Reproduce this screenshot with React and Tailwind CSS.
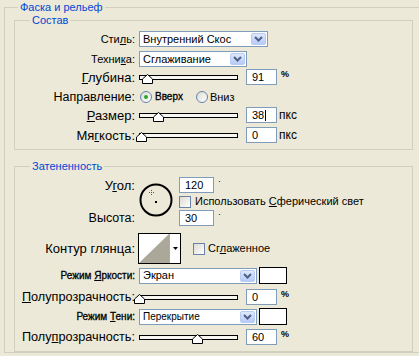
import React from "react";

const U = ({ children }) => (
  <span className="underline decoration-1 underline-offset-[1px]">{children}</span>
);

function Label({ children, className = "" }) {
  return <div className={`w-[120px] shrink-0 text-right leading-none ${className}`}>{children}</div>;
}

function Chevron() {
  return (
    <svg width="9" height="6" viewBox="0 0 9 6">
      <path d="M1 1 L4.5 4.5 L8 1" fill="none" stroke="#4d6185" strokeWidth="2" />
    </svg>
  );
}

function Select({ value, width, textClass = "text-[11px]" }) {
  return (
    <div className={`ml-[4px] flex h-[16px] items-center border border-[#7f9db9] bg-white ${width}`}>
      <span className={`flex-1 pl-[3px] leading-none text-black ${textClass}`}>{value}</span>
      <div className="mr-[1px] flex h-[12px] w-[15px] items-center justify-center rounded-[2px] border border-[#b8cbf3] bg-gradient-to-b from-[#dfe8fd] to-[#b7cbf8]">
        <Chevron />
      </div>
    </div>
  );
}

function Slider({ thumb }) {
  return (
    <div className="relative ml-[4px] h-[5px] w-[99px] border border-black bg-[#f7f6f1]">
      <svg
        className="absolute top-[-2px]"
        style={{ left: thumb }}
        width="11"
        height="10"
        viewBox="0 0 11 10"
      >
        <polygon points="5.5,0.5 10.5,5 10.5,9.5 0.5,9.5 0.5,5" fill="#fff" stroke="#000" strokeWidth="1" />
      </svg>
    </div>
  );
}

function Field({ value, cursor, width = "w-[31px]", className = "ml-[8px]" }) {
  return (
    <div className={`flex h-[16px] items-center border border-[#7f9db9] bg-white pl-[5px] text-[11px] leading-none text-black ${width} ${className}`}>
      {value}
      {cursor && <span className="ml-[1px] inline-block h-[11px] w-px bg-black" />}
    </div>
  );
}

function Pct() {
  return <span className="ml-[4px] self-start pt-[1px] text-[9px] font-bold leading-none">%</span>;
}

function Px() {
  return <span className="ml-[2px] text-[12px] leading-none">пкс</span>;
}

function Check() {
  return (
    <div className="h-[12px] w-[12px] shrink-0 border border-[#6a82a8] bg-gradient-to-br from-[#dcdbd3] to-white" />
  );
}

export default function App() {
  return (
    <div className="h-[356px] w-[419px] overflow-hidden bg-[#ece9d8] font-['Liberation_Sans',Tahoma,sans-serif] text-black">
      <fieldset className="ml-[4px] w-[430px] border border-[#d0d0bf]">
        <legend className="ml-[13px] px-[2px] text-[11px] leading-[14px] text-[#0046d5]">Фаска и рельеф</legend>

        {/* Состав */}
        <fieldset className="ml-[9px] w-[399px] border border-[#d0d0bf] pt-[4px] pb-[6px]">
          <legend className="ml-[15px] px-[2px] text-[11px] leading-[13px] text-[#0046d5]">Состав</legend>

          <div className="flex h-[16px] items-center">
            <Label className="text-[11px]">Сти<U>л</U>ь:</Label>
            <Select value="Внутренний Скос" width="w-[129px]" />
          </div>

          <div className="mt-[4px] flex h-[16px] items-center">
            <Label className="text-[11px]">Техни<U>к</U>а:</Label>
            <Select value="Сглаживание" width="w-[108px]" />
          </div>

          <div className="mt-[2px] flex h-[16px] items-center">
            <Label className="text-[13px]"><U>Г</U>лубина:</Label>
            <Slider thumb={2} />
            <Field value="91" />
            <Pct />
          </div>

          <div className="mt-[4px] flex h-[16px] items-center">
            <Label className="text-[12.5px]">Направление:</Label>
            <div className="ml-[5px] flex h-[12px] w-[12px] items-center justify-center rounded-full border border-[#6a82a8] bg-gradient-to-br from-[#dcdbd3] to-white">
              <div className="h-[4px] w-[4px] rounded-full bg-[#2aa52a]" />
            </div>
            <span className="ml-[3px] text-[10px] leading-none [-webkit-text-stroke:0.3px]">Вверх</span>
            <div className="ml-[13px] h-[12px] w-[12px] rounded-full border border-[#6a82a8] bg-gradient-to-br from-[#dcdbd3] to-white" />
            <span className="ml-[2px] text-[11px] leading-none">Вниз</span>
          </div>

          <div className="mt-[2px] flex h-[16px] items-center">
            <Label className="text-[13px]"><U>Р</U>азмер:</Label>
            <Slider thumb={13} />
            <Field value="38" cursor />
            <Px />
          </div>

          <div className="mt-[4px] flex h-[16px] items-center">
            <Label className="text-[13px]">Мя<U>г</U>кость:</Label>
            <Slider thumb={-4} />
            <Field value="0" />
            <Px />
          </div>
        </fieldset>

        {/* Затененность */}
        <fieldset className="mt-[10px] ml-[9px] w-[399px] border border-[#d0d0bf] pt-[4px] pb-[6px]">
          <legend className="ml-[15px] px-[2px] text-[11px] leading-[13px] text-[#0046d5]">Затененность</legend>

          <div className="grid grid-cols-[120px_44px_auto] grid-rows-[16px_17px_16px] items-center">
            <Label className="text-[13px]">У<U>г</U>ол:</Label>
            <div className="row-span-3 self-start">
              <svg className="ml-[4px] mt-[6px]" width="34" height="34" viewBox="0 0 34 34">
                <circle cx="17" cy="17" r="15.5" fill="none" stroke="#000" strokeWidth="2" />
                <rect x="16" y="18" width="2" height="2" fill="#000" />
                <g fill="#555">
                  <rect x="12" y="7" width="1" height="1" />
                  <rect x="12" y="11" width="1" height="1" />
                  <rect x="10" y="9" width="1" height="1" />
                  <rect x="14" y="9" width="1" height="1" />
                  <rect x="12" y="9" width="1" height="1" />
                </g>
              </svg>
            </div>
            <div className="flex items-start">
              <Field value="120" width="w-[35px]" className="" />
              <span className="ml-[4px] text-[9px] leading-none">·</span>
            </div>

            <div />
            <div className="col-start-3 flex items-center">
              <Check />
              <span className="ml-[4px] text-[11px] leading-none">
                Использовать <U>С</U>ферический свет
              </span>
            </div>

            <Label className="col-start-1 text-[12.5px]">Высота:</Label>
            <div className="col-start-3 flex items-start">
              <Field value="30" width="w-[35px]" className="" />
              <span className="ml-[4px] text-[9px] leading-none">·</span>
            </div>
          </div>

          <div className="mt-[7px] flex h-[31px] items-center">
            <Label className="text-[13px]">Контур глянца:</Label>
            <div className="ml-[3px] flex h-[31px] w-[43px] border border-black bg-white">
              <svg width="30" height="29" viewBox="0 0 30 29">
                <polygon points="0,29 30,0 30,29" fill="#aca899" />
              </svg>
              <div className="flex flex-1 items-center justify-center border-l border-[#b0ada0]">
                <svg width="5" height="3" viewBox="0 0 5 3">
                  <polygon points="0,0 5,0 2.5,3" fill="#000" />
                </svg>
              </div>
            </div>
            <div className="ml-[12px]">
              <Check />
            </div>
            <span className="ml-[3px] text-[11px] leading-none">
              Сг<U>л</U>аженное
            </span>
          </div>

          <div className="mt-[3px] flex h-[17px] items-center">
            <Label className="text-[10px] [-webkit-text-stroke:0.3px]">Режим <U>Я</U>ркости:</Label>
            <Select value="Экран" width="w-[118px]" />
            <div className="ml-[2px] h-[17px] w-[28px] border border-black bg-white" />
          </div>

          <div className="mt-[5px] flex h-[16px] items-center">
            <Label className="text-[12.7px]"><U>П</U>олупрозрачность:</Label>
            <Slider thumb={-6} />
            <Field value="0" />
            <Pct />
          </div>

          <div className="mt-[3px] flex h-[17px] items-center">
            <Label className="text-[10px] [-webkit-text-stroke:0.3px]">Режим <U>Т</U>ени:</Label>
            <Select value="Перекрытие" width="w-[118px]" textClass="text-[10px]" />
            <div className="ml-[2px] h-[17px] w-[28px] border border-black bg-white" />
          </div>

          <div className="mt-[4px] flex h-[16px] items-center">
            <Label className="text-[12.7px]">Полу<U>п</U>розрачность:</Label>
            <Slider thumb={52} />
            <Field value="60" />
            <Pct />
          </div>
        </fieldset>
      </fieldset>
    </div>
  );
}
